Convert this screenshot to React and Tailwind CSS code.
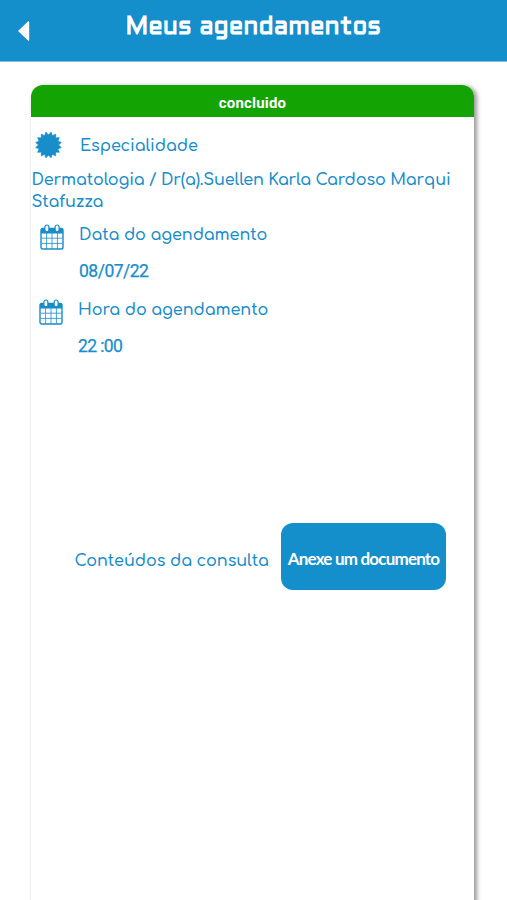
const round = "font-['Comfortaa','Quicksand','Lato',sans-serif]";

function CalendarIcon() {
  return (
    <svg viewBox="0 0 24 26" className="h-[26px] w-6 shrink-0" fill="none" stroke="#178dca">
      <rect x="1" y="4.5" width="22" height="20.5" rx="1.8" strokeWidth="1.4" />
      <path d="M1 4.7h22v4.8H1z" fill="#178dca" stroke="none" />
      <path d="M1.5 14.2h21M1.5 19.4h21M6.6 9v16M12 9v16M17.4 9v16" strokeWidth="0.8" />
      <rect x="4.9" y="1" width="4" height="6.8" rx="2" fill="#fff" strokeWidth="1.2" />
      <rect x="15.1" y="1" width="4" height="6.8" rx="2" fill="#fff" strokeWidth="1.2" />
    </svg>
  );
}

function BadgeIcon() {
  const points = Array.from({ length: 32 }, (_, i) => {
    const a = ((i + 1) * Math.PI) / 16;
    const r = i % 2 ? 10 : 13;
    return `${13.5 + r * Math.cos(a)},${13 + r * Math.sin(a)}`;
  }).join(" ");
  return (
    <svg viewBox="0 0 27 27" className="size-[27px] shrink-0">
      <polygon points={points} fill="#178dca" stroke="#178dca" strokeWidth="0.8" strokeLinejoin="round" />
    </svg>
  );
}

export default function App() {
  return (
    <div className="flex h-[900px] w-full flex-col overflow-hidden bg-white text-[#178dca]">
      <header className="flex h-[62px] shrink-0 items-start border-b border-[#7fc0e3] bg-[#158ecc] text-white">
        <svg viewBox="0 0 12 20" className="mt-[21px] ml-[18px] h-5 w-3">
          <path d="M10.5 1 1 10l9.5 9z" fill="#fff" stroke="#fff" strokeWidth="1.4" strokeLinejoin="round" />
        </svg>
        <h1 className="mt-[12px] ml-[95.5px] font-['Aldrich','Roboto',sans-serif] text-[24.4px] leading-8 font-bold whitespace-nowrap">
          Meus agendamentos
        </h1>
      </header>
      <main className="mt-[23px] ml-[31px] flex h-[900px] w-[443px] shrink-0 flex-col rounded-t-[12px] bg-white shadow-[2.5px_1px_4px_rgba(0,0,0,0.4)]">
        <div className="h-8 shrink-0 rounded-t-[12px] bg-[#13a303] pt-px text-center font-['Roboto',sans-serif] text-[15px] leading-[34px] font-bold tracking-[0.2px] text-white">
          concluido
        </div>
        <div className={`flex flex-col text-[16px] leading-[22px] font-semibold tracking-[-0.06px] whitespace-nowrap ${round}`}>
          <div className="mt-[14px] flex h-7 items-center pl-1">
            <BadgeIcon />
            <span className="mt-px ml-[18px]">Especialidade</span>
          </div>
          <p className="mt-[10px] pl-[0.5px] tracking-[-0.12px]">
            Dermatologia / Dr(a).Suellen Karla Cardoso Marqui
            <br />
            Stafuzza
          </p>
          <div className="mt-[11px] flex h-[26px] items-start pl-[9px]">
            <CalendarIcon />
            <span className="ml-[15px]">Data do agendamento</span>
          </div>
          <p className="mt-[10px] pl-12 font-['Roboto',sans-serif] text-[17.5px] font-normal tracking-[-0.5px] [-webkit-text-stroke:0.25px_#178dca]">08/07/22</p>
          <div className="mt-[17px] flex h-[26px] items-start pl-2">
            <CalendarIcon />
            <span className="ml-[15px]">Hora do agendamento</span>
          </div>
          <p className="mt-[10px] pl-[47px] font-['Roboto',sans-serif] text-[17.5px] font-normal tracking-[-0.6px] [-webkit-text-stroke:0.25px_#178dca]">22 :00</p>
          <div className="mt-[166px] flex h-[67px] items-center pl-[43.5px]">
            <span className="mt-[9px] w-[206.5px]">Conteúdos da consulta</span>
            <button className="h-[67px] w-[165px] rounded-[12px] bg-[#158ecc] pt-1 font-['Lato',sans-serif] text-[17px] font-bold tracking-[-0.8px] text-white">
              Anexe um documento
            </button>
          </div>
        </div>
      </main>
    </div>
  );
}
